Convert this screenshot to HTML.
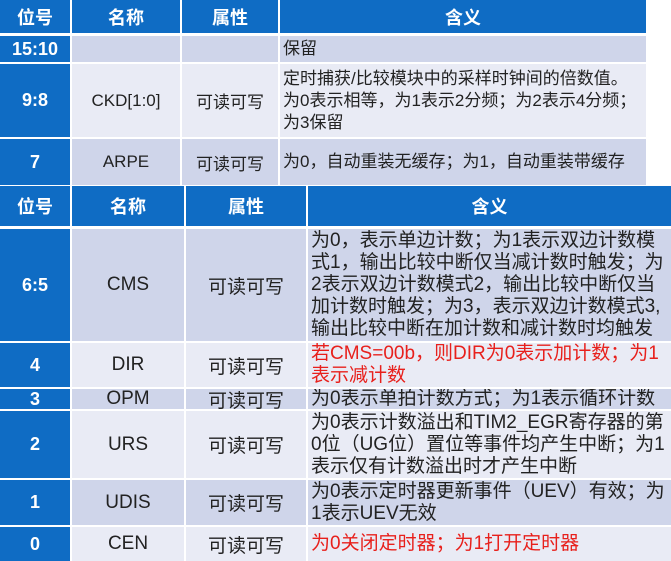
<!DOCTYPE html><html><head><meta charset="utf-8"><style>
body{margin:0;width:671px;height:561px;background:#fff;position:relative;overflow:hidden;font-family:"Liberation Sans","Noto Sans CJK SC",sans-serif;}
.c{position:absolute;box-sizing:border-box;display:flex;align-items:center;justify-content:center;color:#222;overflow:hidden}
.h{background:#0f6cc4;color:#fff;font-weight:bold;font-size:18px}
.b{background:#0f6cc4;color:#fff;font-weight:bold;font-size:18px}
.d{background:#cfd5ea}.l{background:#e9ebf5}
.t{justify-content:flex-start;text-align:left;padding-left:3px;line-height:22px;white-space:nowrap}
.s{font-size:17px}.m{font-size:19px}
.r{color:#e8201c}
</style></head><body>
<div class="c h" style="left:0;top:0;width:70px;height:33px">位号</div>
<div class="c h" style="left:72px;top:0;width:108px;height:33px">名称</div>
<div class="c h" style="left:182px;top:0;width:96px;height:33px">属性</div>
<div class="c h" style="left:280px;top:0;width:366px;height:33px">含义</div>

<div class="c b" style="left:0;top:36px;width:70px;height:26px">15:10</div>
<div class="c d" style="left:72px;top:36px;width:108px;height:26px"></div>
<div class="c d" style="left:182px;top:36px;width:96px;height:26px"></div>
<div class="c d t s" style="left:280px;top:36px;width:366px;height:26px">保留</div>

<div class="c b" style="left:0;top:64px;width:70px;height:73px">9:8</div>
<div class="c l s" style="left:72px;top:64px;width:108px;height:73px">CKD[1:0]</div>
<div class="c l s" style="left:182px;top:64px;width:96px;height:73px">可读可写</div>
<div class="c l t s" style="left:280px;top:64px;width:366px;height:73px;line-height:22px">定时捕获/比较模块中的采样时钟间的倍数值。<br>为0表示相等，为1表示2分频；为2表示4分频；<br>为3保留</div>

<div class="c b" style="left:0;top:139px;width:70px;height:46px">7</div>
<div class="c d s" style="left:72px;top:139px;width:108px;height:46px">ARPE</div>
<div class="c d s" style="left:182px;top:139px;width:96px;height:46px">可读可写</div>
<div class="c d t s" style="left:280px;top:139px;width:366px;height:46px">为0，自动重装无缓存；为1，自动重装带缓存</div>

<div class="c h" style="left:0;top:186px;width:70px;height:40px">位号</div>
<div class="c h" style="left:72px;top:186px;width:112px;height:40px">名称</div>
<div class="c h" style="left:186px;top:186px;width:120px;height:40px">属性</div>
<div class="c h" style="left:308px;top:186px;width:363px;height:40px">含义</div>

<div class="c b" style="left:0;top:229px;width:70px;height:112px">6:5</div>
<div class="c d m" style="left:72px;top:229px;width:112px;height:112px">CMS</div>
<div class="c d m" style="left:186px;top:229px;width:120px;height:112px">可读可写</div>
<div class="c d t m" style="left:308px;top:229px;width:363px;height:112px">为0，表示单边计数；为1表示双边计数模<br>式1，输出比较中断仅当减计数时触发；为<br>2表示双边计数模式2，输出比较中断仅当<br>加计数时触发；为3，表示双边计数模式3,<br>输出比较中断在加计数和减计数时均触发</div>

<div class="c b" style="left:0;top:343px;width:70px;height:44px">4</div>
<div class="c l m" style="left:72px;top:343px;width:112px;height:44px">DIR</div>
<div class="c l m" style="left:186px;top:343px;width:120px;height:44px">可读可写</div>
<div class="c l t m r" style="left:308px;top:343px;width:363px;height:44px">若CMS=00b，则DIR为0表示加计数；为1<br>表示减计数</div>

<div class="c b" style="left:0;top:389px;width:70px;height:20px">3</div>
<div class="c d m" style="left:72px;top:389px;width:112px;height:20px">OPM</div>
<div class="c d m" style="left:186px;top:389px;width:120px;height:20px">可读可写</div>
<div class="c d t m" style="left:308px;top:389px;width:363px;height:20px">为0表示单拍计数方式；为1表示循环计数</div>

<div class="c b" style="left:0;top:411px;width:70px;height:67px">2</div>
<div class="c l m" style="left:72px;top:411px;width:112px;height:67px">URS</div>
<div class="c l m" style="left:186px;top:411px;width:120px;height:67px">可读可写</div>
<div class="c l t m" style="left:308px;top:411px;width:363px;height:67px">为0表示计数溢出和TIM2_EGR寄存器的第<br>0位（UG位）置位等事件均产生中断；为1<br>表示仅有计数溢出时才产生中断</div>

<div class="c b" style="left:0;top:480px;width:70px;height:45px">1</div>
<div class="c d m" style="left:72px;top:480px;width:112px;height:45px">UDIS</div>
<div class="c d m" style="left:186px;top:480px;width:120px;height:45px">可读可写</div>
<div class="c d t m" style="left:308px;top:480px;width:363px;height:45px">为0表示定时器更新事件（UEV）有效；为<br>1表示UEV无效</div>

<div class="c b" style="left:0;top:527px;width:70px;height:34px">0</div>
<div class="c l m" style="left:72px;top:527px;width:112px;height:34px">CEN</div>
<div class="c l m" style="left:186px;top:527px;width:120px;height:34px">可读可写</div>
<div class="c l t m r" style="left:308px;top:527px;width:363px;height:34px">为0关闭定时器；为1打开定时器</div>
</body></html>
